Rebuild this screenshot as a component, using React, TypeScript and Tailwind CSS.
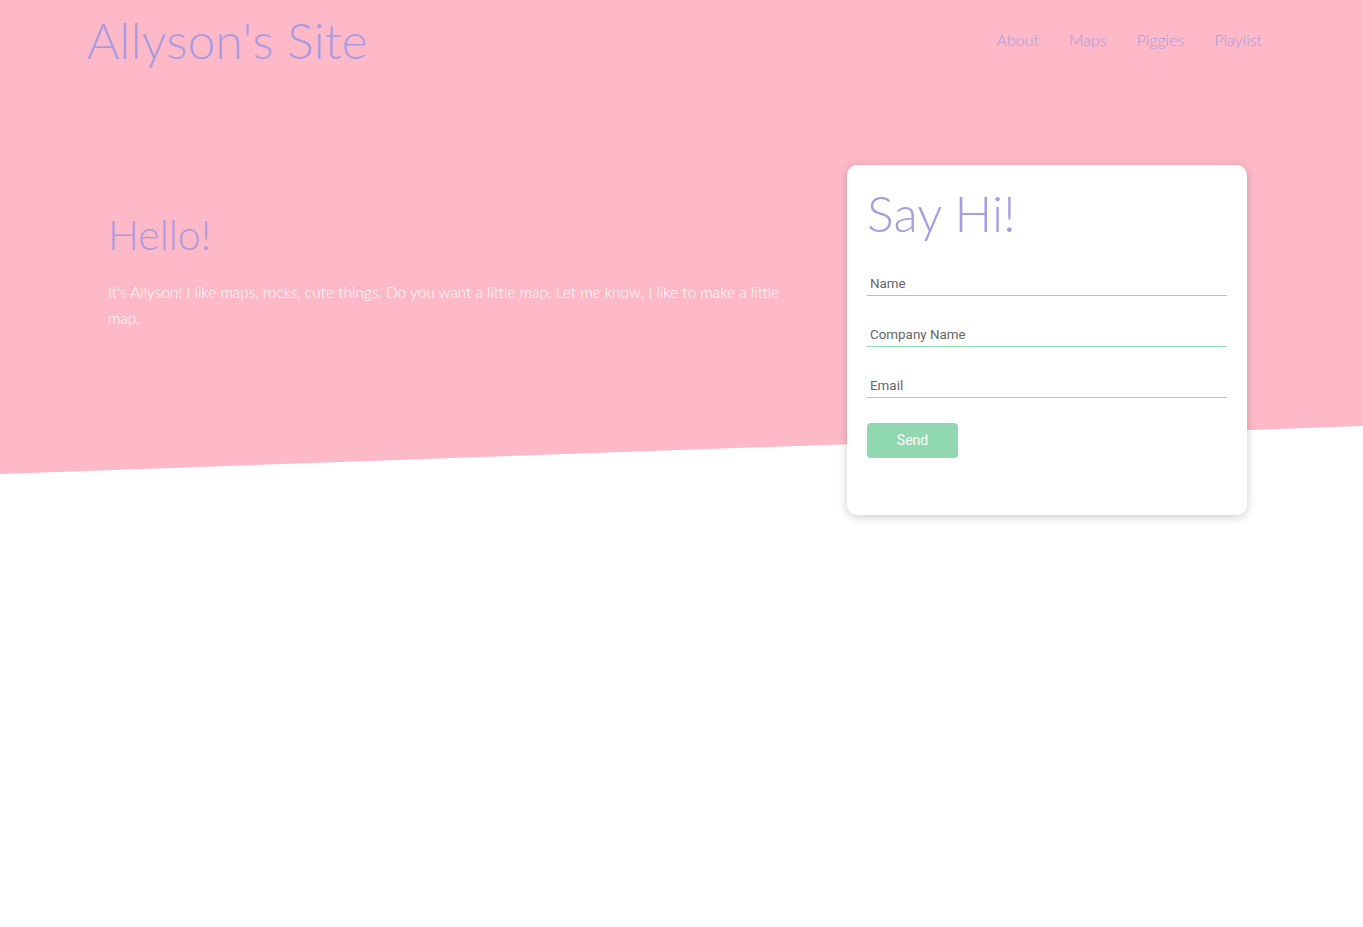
import React from "react";

const lato = "font-['Lato','Open_Sans',sans-serif]";

export default function App() {
  return (
    <div className={`relative min-h-[927px] bg-white ${lato}`}>
      {/* pink slanted backdrop */}
      <div className="absolute inset-x-0 top-0 h-[474px] bg-[#fdb9c7] [clip-path:polygon(0_0,100%_0,100%_426px,0_474px)]" />

      <div className="relative">
        <header className="flex items-start justify-between pl-[87px] pr-[101px] pt-[8px]">
          <h1 className="text-[50px] font-light leading-[64px] text-[#a99be0]">Allyson's Site</h1>
          <nav className="flex gap-[30px] pt-[20px] text-[16px] font-light text-[#a99be0]">
            <a>About</a>
            <a>Maps</a>
            <a>Piggies</a>
            <a>Playlist</a>
          </nav>
        </header>

        <section className="mt-[93px] flex justify-between pl-[108px] pr-[116px]">
          <div className="w-[690px] pt-[45px]">
            <h2 className="text-[41px] font-light leading-[50px] text-[#a99be0]">Hello!</h2>
            <p className="mt-[19px] text-[15.4px] font-light leading-[26px] text-white">
              It's Allyson! I like maps, rocks, cute things. Do you want a little map. Let me know. I like to make a little map.
            </p>
          </div>

          <div className="h-[350px] w-[400px] rounded-[10px] bg-white px-[20px] pt-[16px] shadow-[0_2px_10px_rgba(0,0,0,0.2)]">
            <h3 className="text-[50px] font-light leading-[64px] text-[#a99be0]">Say Hi!</h3>
            <form className="mt-[27px] flex flex-col gap-[27px] font-['Roboto','Liberation_Sans',sans-serif]">
              {["Name", "Company Name", "Email"].map((p) => (
                <input
                  key={p}
                  placeholder={p}
                  className="h-[24px] w-full border-0 border-b border-solid border-b-[#8fd8b0] px-[3px] text-[13.4px] text-[#555] outline-none placeholder:text-[#666]"
                />
              ))}
              <button
                type="button"
                className="-mt-[2px] h-[35px] w-[91px] rounded-[4px] bg-[#8fd8b0] text-[14px] font-normal text-white"
              >
                Send
              </button>
            </form>
          </div>
        </section>
      </div>
    </div>
  );
}
